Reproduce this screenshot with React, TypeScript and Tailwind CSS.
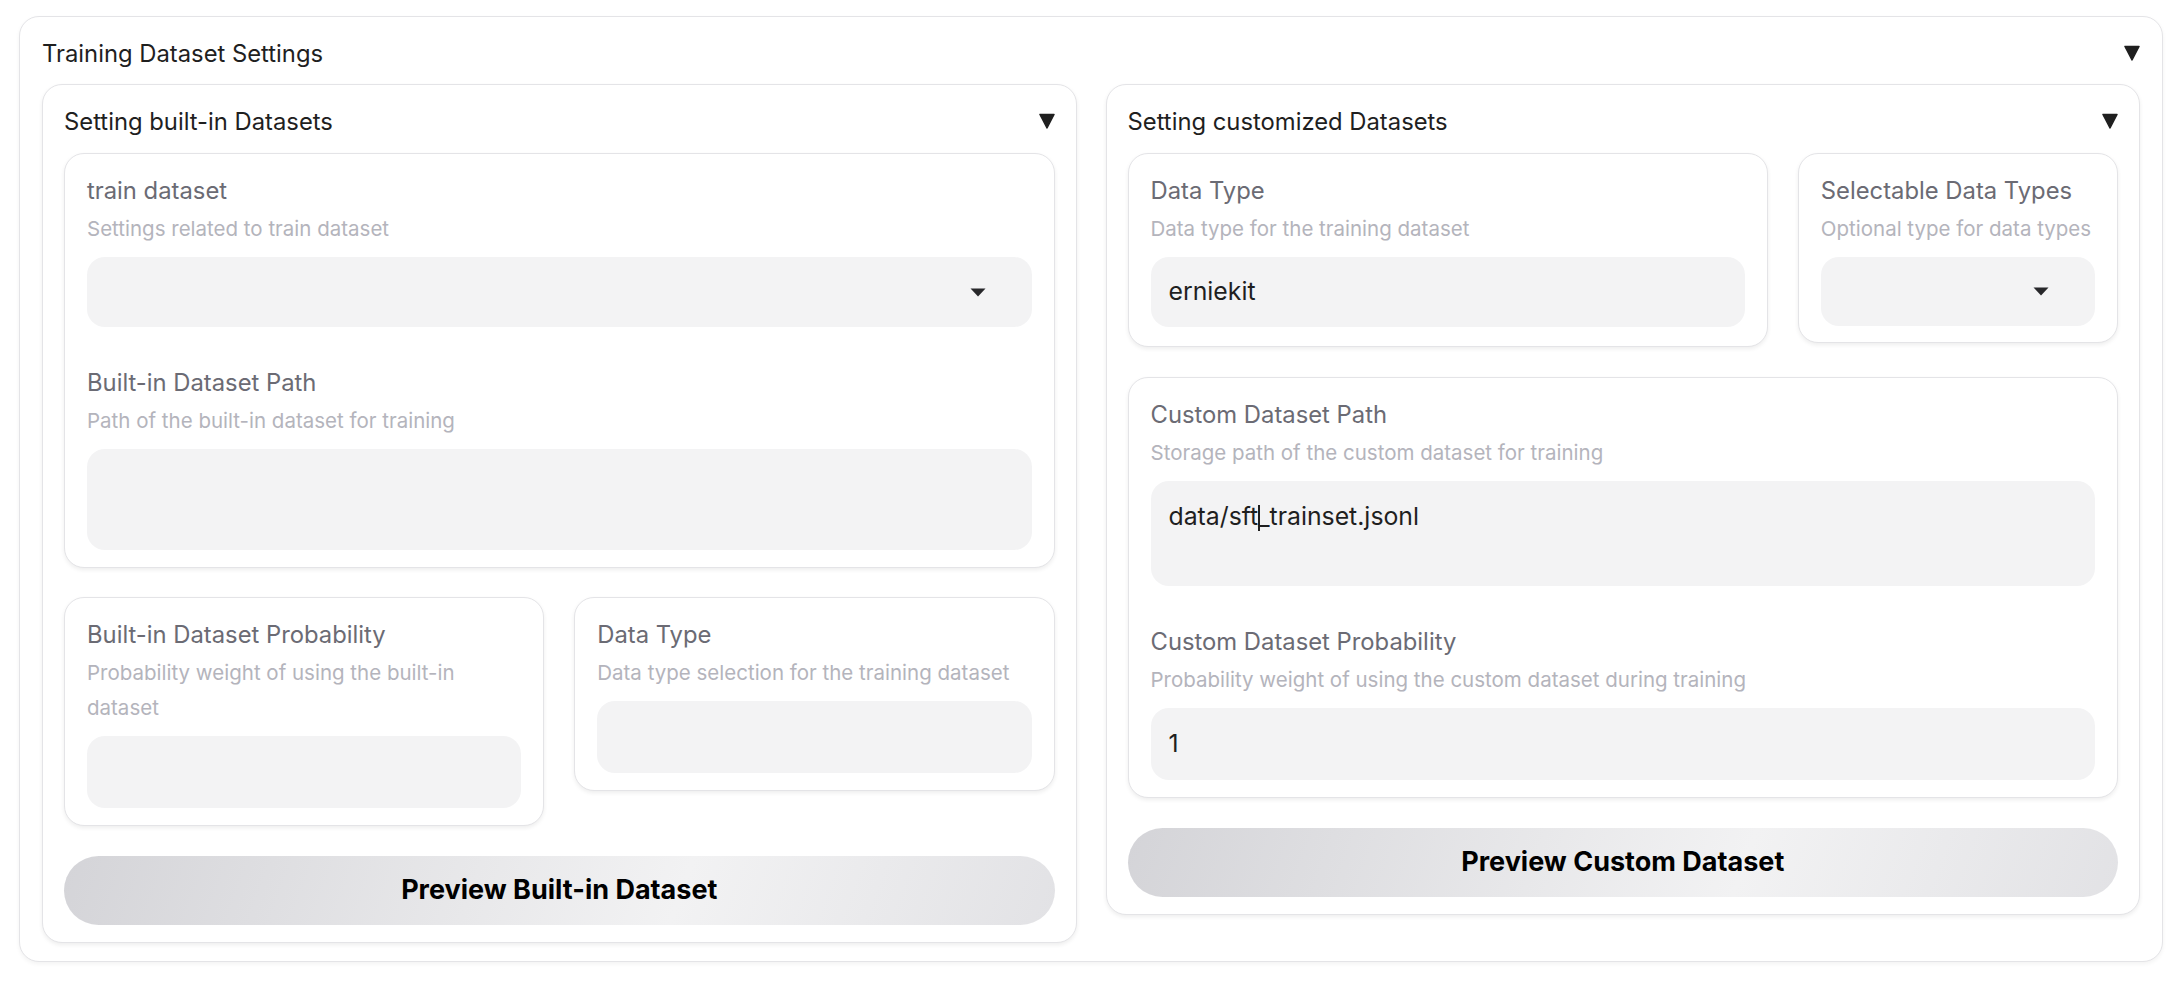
import React from "react";

function AccTri() {
  return (
    <svg width="16" height="16" viewBox="0 0 16 16" className="shrink-0">
      <polygon points="1,1.5 15,1.5 8,15" fill="#1f1f1f" stroke="#1f1f1f" strokeWidth="1.5" strokeLinejoin="round" />
    </svg>
  );
}

function Caret() {
  return (
    <svg width="16" height="9" viewBox="0 0 16 9" className="shrink-0">
      <polygon points="0.5,0.5 15.5,0.5 8,8.5" fill="#27272a" />
    </svg>
  );
}

function Card({ children, className = "" }: { children: React.ReactNode; className?: string }) {
  return (
    <div
      className={
        "rounded-[20px] border border-[#e4e4e7] bg-white px-[22px] pt-[22px] shadow-[0_2px_4px_rgba(0,0,0,0.07)] " +
        className
      }
    >
      {children}
    </div>
  );
}

function Field({
  label,
  desc,
  children,
  nowrap = false,
}: {
  label: string;
  desc: React.ReactNode;
  children: React.ReactNode;
  nowrap?: boolean;
}) {
  return (
    <div>
      <div className="relative top-[1px] h-[28px] text-[23.8px] leading-[28px] text-[#6b6b74]">{label}</div>
      <div
        className={
          "relative top-[1px] mt-[6px] text-[20.5px] leading-[35px] text-[#b4b4bc]" + (nowrap ? " whitespace-nowrap" : "")
        }
      >
        {desc}
      </div>
      <div className="mt-[12px]">{children}</div>
    </div>
  );
}

function Box({ h, children, select = false }: { h: string; children?: React.ReactNode; select?: boolean }) {
  return (
    <div
      className={
        "flex items-center rounded-[18px] bg-[#f3f3f4] pl-[18px] text-[24.8px] text-[#1f1f1f] " +
        h +
        (select ? " justify-between pr-[46px]" : " pr-[18px]")
      }
    >
      <span>{children}</span>
      {select && <Caret />}
    </div>
  );
}

function Header({ title }: { title: string }) {
  return (
    <div className="flex h-[28px] items-center justify-between">
      <span className="relative top-[1px] text-[23.8px] leading-[28px] text-[#1f1f1f]">{title}</span>
      <AccTri />
    </div>
  );
}

function Btn({ children }: { children: React.ReactNode }) {
  return (
    <div className="flex h-[69px] items-center justify-center rounded-full bg-[linear-gradient(110deg,#d4d4d8,#f2f2f3_62%,#e2e2e5)] text-[27px] font-bold text-black">
      {children}
    </div>
  );
}

export default function App() {
  return (
    <div className="bg-white pt-[16px] pl-[19px] pr-[21px] pb-[28px] font-['Inter',sans-serif]">
      <div className="rounded-[20px] border border-[#e4e4e7] bg-white px-[22px] pt-[22px] pb-[18px] shadow-[0_2px_4px_rgba(0,0,0,0.05)]">
        <Header title="Training Dataset Settings" />
        <div className="mt-[17px] grid grid-cols-2 items-start gap-[29px]">
          {/* Left panel */}
          <div className="rounded-[20px] border border-[#e4e4e7] bg-white px-[21px] pt-[22px] pb-[17px] shadow-[0_2px_4px_rgba(0,0,0,0.07)]">
            <Header title="Setting built-in Datasets" />
            <div className="mt-[18px] flex flex-col gap-[29px]">
              <Card className="pb-[17px]">
                <Field label="train dataset" desc="Settings related to train dataset">
                  <Box h="h-[70px]" select />
                </Field>
                <div className="mt-[41px]">
                  <Field label="Built-in Dataset Path" desc="Path of the built-in dataset for training">
                    <Box h="h-[101px]" />
                  </Field>
                </div>
              </Card>
              <div className="grid grid-cols-2 items-start gap-[30px]">
                <Card className="pb-[17px]">
                  <Field
                    label="Built-in Dataset Probability"
                    desc={
                      <>
                        Probability weight of using the built-in
                        <br />
                        dataset
                      </>
                    }
                  >
                    <Box h="h-[72px]" />
                  </Field>
                </Card>
                <Card className="pb-[17px]">
                  <Field label="Data Type" desc="Data type selection for the training dataset" nowrap>
                    <Box h="h-[72px]" />
                  </Field>
                </Card>
              </div>
              <div className="mt-px">
                <Btn>Preview Built-in Dataset</Btn>
              </div>
            </div>
          </div>

          {/* Right panel */}
          <div className="rounded-[20px] border border-[#e4e4e7] bg-white px-[21px] pt-[22px] pb-[17px] shadow-[0_2px_4px_rgba(0,0,0,0.07)]">
            <Header title="Setting customized Datasets" />
            <div className="mt-[18px] flex flex-col gap-[30px]">
              <div className="grid grid-cols-[2fr_1fr] items-start gap-[30px]">
                <Card className="pb-[19px]">
                  <Field label="Data Type" desc="Data type for the training dataset">
                    <Box h="h-[70px]">erniekit</Box>
                  </Field>
                </Card>
                <Card className="pb-[16px]">
                  <Field label="Selectable Data Types" desc="Optional type for data types" nowrap>
                    <Box h="h-[69px]" select />
                  </Field>
                </Card>
              </div>
              <Card className="pb-[17px]">
                <Field label="Custom Dataset Path" desc="Storage path of the custom dataset for training">
                  <div className="h-[105px] rounded-[18px] bg-[#f3f3f4] px-[18px] pt-[19px] text-[24.8px] leading-[33px] text-[#1f1f1f]">
                    data/sft
                    <span className="relative inline-block h-[26px] w-0 align-middle">
                      <span className="absolute left-0 top-0 h-[26px] w-[1.5px] bg-[#1f1f1f]" />
                    </span>
                    _trainset.jsonl
                  </div>
                </Field>
                <div className="mt-[41px]">
                  <Field label="Custom Dataset Probability" desc="Probability weight of using the custom dataset during training">
                    <Box h="h-[72px]">1</Box>
                  </Field>
                </div>
              </Card>
              <Btn>Preview Custom Dataset</Btn>
            </div>
          </div>
        </div>
      </div>
    </div>
  );
}
